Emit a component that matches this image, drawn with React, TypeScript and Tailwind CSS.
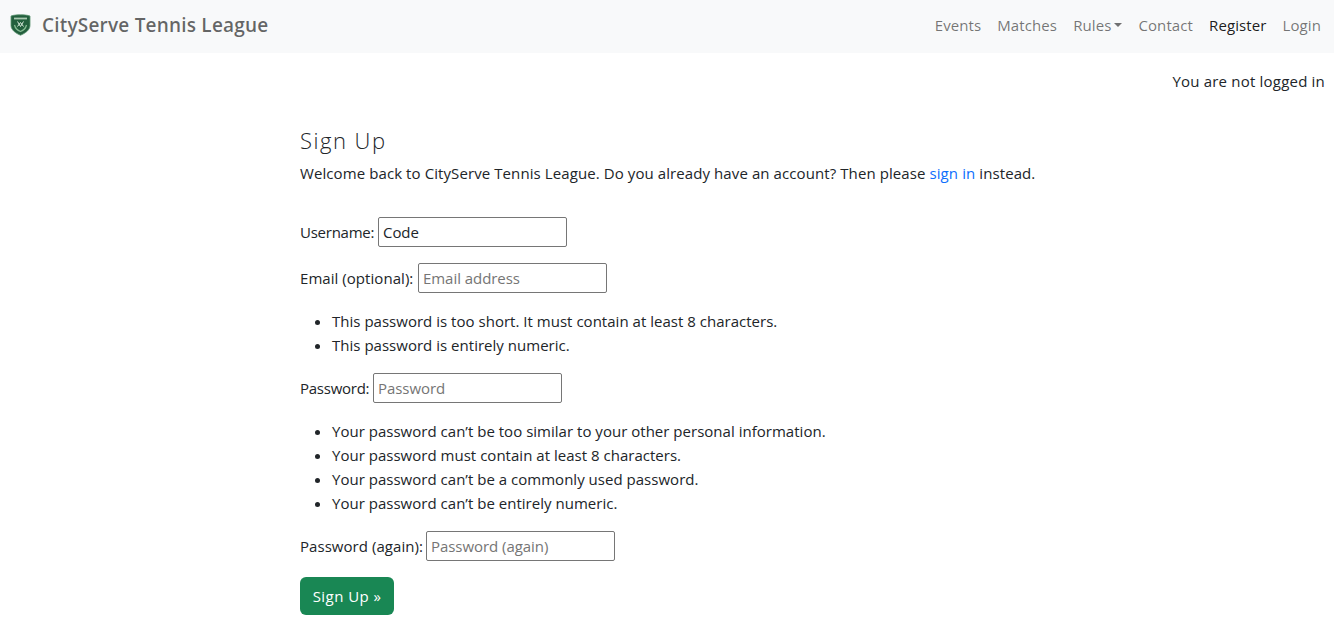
const Logo = () => (
  <svg width="21" height="22" viewBox="0 0 21 22" aria-hidden="true">
    <path d="M1 2 C4 1 7 .8 10.5 .8 C14 .8 17 1 20 2 L20 11.5 C20 16 15 19.5 10.5 21.2 C6 19.5 1 16 1 11.5 Z" fill="#235f3d" stroke="#5c9470" strokeWidth=".8" />
    <rect x="4" y="3.6" width="13" height="1.8" fill="#a9c8b0" />
    <path d="M7.5 7.5 L10.5 12.5 L13.5 7.5 M7.5 12.5 L10.5 8.5 L13.5 12.5" fill="none" stroke="#d5e6d8" strokeWidth="1" />
    <path d="M4.5 11 C5.5 15 8 16.5 10.5 17.5 C13 16.5 15.5 15 16.5 11" fill="none" stroke="#86bb92" strokeWidth="1.3" />
  </svg>
);

const NavLink = ({ label, active }: { label: string; active?: boolean }) => (
  <a href="#" className={active ? 'px-2 text-black/90' : 'px-2 text-black/55'}>
    {label}
  </a>
);

const Field = ({ label, labelClass, placeholder, value }: { label: string; labelClass: string; placeholder: string; value?: string }) => (
  <p className="mb-4 flex items-center">
    <label className={`${labelClass} whitespace-nowrap`}>{label}</label>
    <input
      type="text"
      readOnly
      placeholder={placeholder}
      value={value}
      className="h-[30px] w-[189px] rounded-[2px] border border-[#767676] px-[4px] tracking-[-0.05px] text-[#212529] outline-none placeholder:text-[#757575]"
    />
  </p>
);

const HelpList = ({ items }: { items: string[] }) => (
  <ul className="mb-4 list-disc pl-8 tracking-[0.02px]">
    {items.map((item) => (
      <li key={item} className="h-6 leading-6">
        {item}
      </li>
    ))}
  </ul>
);

export default function App() {
  return (
    <div className="min-h-[638px] bg-white font-['Open_Sans','Noto_Sans',sans-serif] text-[15px] leading-6 tracking-[0.05px] text-[#212529]">
      <nav className="flex h-[53px] items-center justify-between bg-[#f8f9fa] pb-[4px] pl-[10px] pr-[5px]">
        <a href="#" className="flex items-center gap-[11px] text-[19px] font-semibold tracking-[0.2px] text-black/60">
          <Logo />
          CityServe Tennis League
        </a>
        <div className="flex items-center tracking-[0.1px]">
          <NavLink label="Events" />
          <NavLink label="Matches" />
          <a href="#" className="flex items-center px-2 text-black/55">
            Rules
            <span className="ml-[3px] border-x-[4.5px] border-t-[4.5px] border-x-transparent border-t-black/55" />
          </a>
          <NavLink label="Contact" />
          <NavLink label="Register" active />
          <NavLink label="Login" />
        </div>
      </nav>

      <p className="mt-4 pr-[9px] text-right tracking-[0.2px]">You are not logged in</p>

      <main className="ml-[300px] mt-[34px] w-[760px]">
        <h1 className="text-[22px] font-light leading-[26px] tracking-[1.5px]">Sign Up</h1>
        <p className="mb-8 mt-[8px] tracking-[0.09px]">
          Welcome back to CityServe Tennis League. Do you already have an account? Then please{' '}
          <a href="#" className="text-[#0d6efd]">
            sign in
          </a>{' '}
          instead.
        </p>
        <form>
          <Field label="Username:" labelClass="w-[78px] tracking-[-0.25px]" placeholder="Username" value="Code" />
          <Field label="Email (optional):" labelClass="w-[118px]" placeholder="Email address" />
          <HelpList items={['This password is too short. It must contain at least 8 characters.', 'This password is entirely numeric.']} />
          <Field label="Password:" labelClass="w-[73px] tracking-[-0.25px]" placeholder="Password" />
          <HelpList
            items={[
              'Your password can’t be too similar to your other personal information.',
              'Your password must contain at least 8 characters.',
              'Your password can’t be a commonly used password.',
              'Your password can’t be entirely numeric.',
            ]}
          />
          <Field label="Password (again):" labelClass="w-[126px]" placeholder="Password (again)" />
          <button type="button" className="h-[38px] w-[94px] rounded-[6px] bg-[#198754] text-center tracking-[0.45px] text-white">
            Sign Up »
          </button>
        </form>
      </main>
    </div>
  );
}
